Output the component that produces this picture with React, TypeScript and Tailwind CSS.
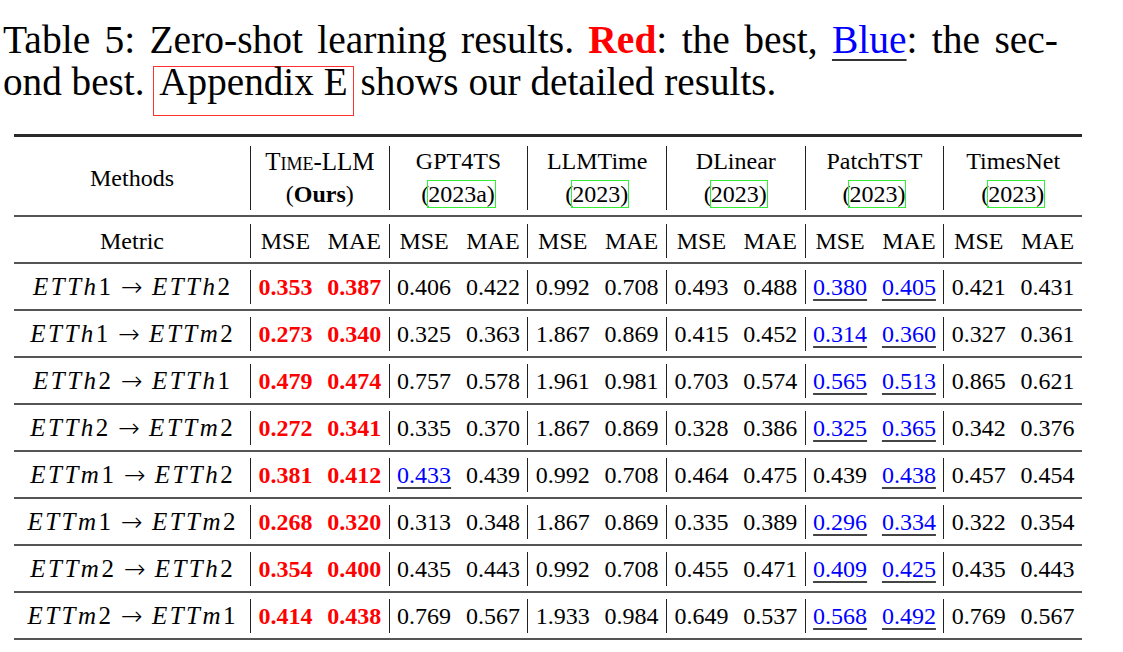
import React from "react";

type Cell = [string, "" | "r" | "b"];

const groups: { name: React.ReactNode; sub: React.ReactNode }[] = [
  {
    name: (
      <>
        <span className="[font-variant:small-caps]">Time</span>-LLM
      </>
    ),
    sub: (
      <>
        (<b>Ours</b>)
      </>
    ),
  },
  { name: "GPT4TS", sub: "2023a" },
  { name: "LLMTime", sub: "2023" },
  { name: "DLinear", sub: "2023" },
  { name: "PatchTST", sub: "2023" },
  { name: "TimesNet", sub: "2023" },
];

const rows: { a: [string, string]; b: [string, string]; v: Cell[] }[] = [
  {
    a: ["h", "1"],
    b: ["h", "2"],
    v: [["0.353", "r"], ["0.387", "r"], ["0.406", ""], ["0.422", ""], ["0.992", ""], ["0.708", ""], ["0.493", ""], ["0.488", ""], ["0.380", "b"], ["0.405", "b"], ["0.421", ""], ["0.431", ""]],
  },
  {
    a: ["h", "1"],
    b: ["m", "2"],
    v: [["0.273", "r"], ["0.340", "r"], ["0.325", ""], ["0.363", ""], ["1.867", ""], ["0.869", ""], ["0.415", ""], ["0.452", ""], ["0.314", "b"], ["0.360", "b"], ["0.327", ""], ["0.361", ""]],
  },
  {
    a: ["h", "2"],
    b: ["h", "1"],
    v: [["0.479", "r"], ["0.474", "r"], ["0.757", ""], ["0.578", ""], ["1.961", ""], ["0.981", ""], ["0.703", ""], ["0.574", ""], ["0.565", "b"], ["0.513", "b"], ["0.865", ""], ["0.621", ""]],
  },
  {
    a: ["h", "2"],
    b: ["m", "2"],
    v: [["0.272", "r"], ["0.341", "r"], ["0.335", ""], ["0.370", ""], ["1.867", ""], ["0.869", ""], ["0.328", ""], ["0.386", ""], ["0.325", "b"], ["0.365", "b"], ["0.342", ""], ["0.376", ""]],
  },
  {
    a: ["m", "1"],
    b: ["h", "2"],
    v: [["0.381", "r"], ["0.412", "r"], ["0.433", "b"], ["0.439", ""], ["0.992", ""], ["0.708", ""], ["0.464", ""], ["0.475", ""], ["0.439", ""], ["0.438", "b"], ["0.457", ""], ["0.454", ""]],
  },
  {
    a: ["m", "1"],
    b: ["m", "2"],
    v: [["0.268", "r"], ["0.320", "r"], ["0.313", ""], ["0.348", ""], ["1.867", ""], ["0.869", ""], ["0.335", ""], ["0.389", ""], ["0.296", "b"], ["0.334", "b"], ["0.322", ""], ["0.354", ""]],
  },
  {
    a: ["m", "2"],
    b: ["h", "2"],
    v: [["0.354", "r"], ["0.400", "r"], ["0.435", ""], ["0.443", ""], ["0.992", ""], ["0.708", ""], ["0.455", ""], ["0.471", ""], ["0.409", "b"], ["0.425", "b"], ["0.435", ""], ["0.443", ""]],
  },
  {
    a: ["m", "2"],
    b: ["m", "1"],
    v: [["0.414", "r"], ["0.438", "r"], ["0.769", ""], ["0.567", ""], ["1.933", ""], ["0.984", ""], ["0.649", ""], ["0.537", ""], ["0.568", "b"], ["0.492", "b"], ["0.769", ""], ["0.567", ""]],
  },
];

function Val({ c }: { c: Cell }) {
  const [t, s] = c;
  if (s === "r") return <span className="font-bold text-[#ff0000]">{t}</span>;
  if (s === "b")
    return (
      <span className="text-[#0000ff] underline decoration-[#444] decoration-[1.5px] underline-offset-[4px]">
        {t}
      </span>
    );
  return <span>{t}</span>;
}

function Ds({ p }: { p: [string, string] }) {
  return (
    <span>
      <i className="tracking-[2.5px]">ETT{p[0]}</i>
      <span className="tracking-[1px]">{p[1]}</span>
    </span>
  );
}

const rowGrid = "grid grid-cols-[236px_repeat(6,minmax(0,1fr))]";

export default function App() {
  return (
    <div className="w-[1123px] h-[652px] bg-white text-black font-['Liberation_Serif',serif] overflow-hidden">
      {/* Caption */}
      <div className="h-[134px] pt-[19px] pl-[3px] w-[1058px] text-[39.5px] leading-[42px]">
        <p className="whitespace-nowrap flex justify-between">
          <span>Table</span>
          <span>5:</span>
          <span>Zero-shot</span>
          <span>learning</span>
          <span>results.</span>
          <span>
            <b className="text-[#ff0000]">Red</b>:
          </span>
          <span>the</span>
          <span>best,</span>
          <span>
            <span className="text-[#0000ff] underline decoration-[#333] decoration-[1.5px] underline-offset-[6px]">Blue</span>:
          </span>
          <span>the</span>
          <span>sec-</span>
        </p>
        <p className="whitespace-nowrap text-[39.2px]">
          ond best.{" "}
          <span className="inline-block border border-[#ff3030] leading-[30px] pb-[18px] px-[5px] -ml-[1px]">
            Appendix E
          </span>
          <span className="ml-[7px]">shows our detailed results.</span>
        </p>
      </div>

      {/* Table */}
      <div className="ml-[14px] w-[1068px] text-[24px] border-t-[3px] border-[#2a2a2a]">
        {/* Header row */}
        <div className={`${rowGrid} pt-[9px] pb-[5px]`}>
          <div className="h-[64px] flex items-center justify-center">Methods</div>
          {groups.map((g, i) => (
            <div
              key={i}
              className="h-[64px] border-l border-[#222] flex flex-col items-center justify-center leading-[33px]"
            >
              <div className={i === 0 ? "text-[25px]" : ""}>{g.name}</div>
              <div>
                {typeof g.sub === "string" ? (
                  <>
                    (
                    <span className="border border-[#33ee33] -ml-[2px] leading-[26px]">{g.sub})</span>
                  </>
                ) : (
                  g.sub
                )}
              </div>
            </div>
          ))}
        </div>

        {/* Metric row */}
        <div className={`${rowGrid} border-t-2 border-[#555] pt-[7px] pb-[4px]`}>
          <div className="h-[34px] flex items-center justify-center">Metric</div>
          {groups.map((_, i) => (
            <div key={i} className="h-[34px] border-l border-[#222] flex items-center">
              <div className="flex-1 text-center">MSE</div>
              <div className="flex-1 text-center">MAE</div>
            </div>
          ))}
        </div>

        {/* Data rows */}
        {rows.map((r, ri) => (
          <div
            key={ri}
            className={`${rowGrid} border-t-2 border-[#555] pt-[6px] pb-[5px] ${
              ri === rows.length - 1 ? "border-b-2" : ""
            }`}
          >
            <div className="h-[34px] flex items-center justify-center text-[25px]">
              <Ds p={r.a} />
              <span className="mx-[9px] font-['DejaVu_Sans',sans-serif] text-[26px] font-extralight">→</span>
              <Ds p={r.b} />
            </div>
            {groups.map((_, gi) => (
              <div key={gi} className="h-[34px] border-l border-[#222] flex items-center">
                <div className="flex-1 text-center">
                  <Val c={r.v[gi * 2]} />
                </div>
                <div className="flex-1 text-center">
                  <Val c={r.v[gi * 2 + 1]} />
                </div>
              </div>
            ))}
          </div>
        ))}
      </div>
    </div>
  );
}
